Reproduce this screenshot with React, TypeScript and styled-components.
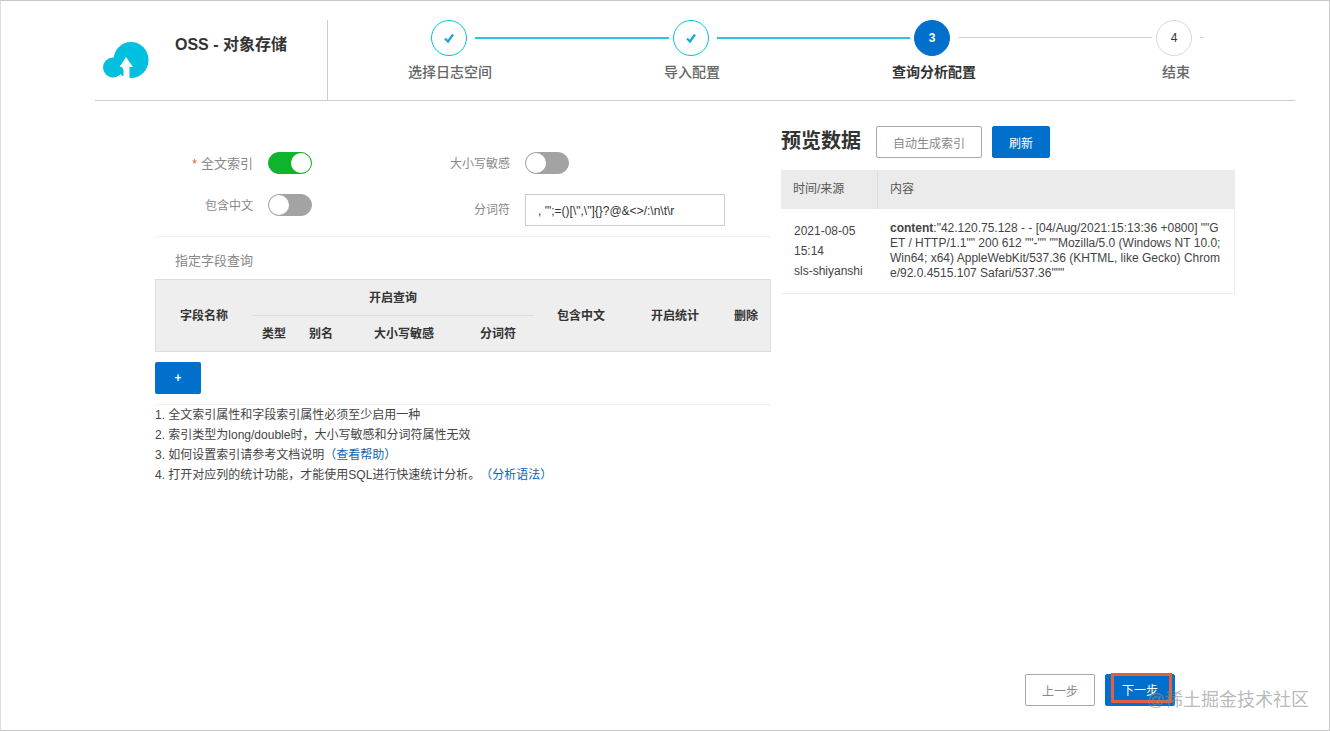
import styled, { createGlobalStyle } from 'styled-components';

const GlobalStyle = createGlobalStyle`
  html, body {
    margin: 0;
    padding: 0;
    background: #fff;
  }
  body {
    font-family: "Liberation Sans", "Noto Sans CJK SC", sans-serif;
    font-size: 12px;
    color: #333;
  }
`;

const Frame = styled.div`
  position: relative;
  display: flex;
  flex-direction: column;
  width: 1330px;
  height: 731px;
  box-sizing: border-box;
  border: 1px solid #c8c8c8;
  border-left-color: #ddd;
  overflow: hidden;
`;

const Header = styled.header`
  display: flex;
  align-items: flex-end;
  flex: none;
  width: 1200px;
  height: 100px;
  box-sizing: border-box;
  margin-left: 94px;
  border-bottom: 1px solid #ccc;
`;

const Brand = styled.div`
  display: flex;
  align-items: flex-start;
  flex: none;
  width: 233px;
  height: 80px;
  box-sizing: border-box;
  padding-left: 8px;
  border-right: 1px solid #ccc;
`;

const Logo = styled.svg`
  flex: none;
  width: 46px;
  height: 36px;
  margin-top: 22px;
`;

const BrandTitle = styled.div`
  margin: 14px 0 0 26px;
  font-size: 16px;
  line-height: 22px;
  font-weight: 700;
  color: #333;
  white-space: nowrap;
`;

const Stepper = styled.div`
  display: flex;
  flex-direction: column;
  align-self: flex-start;
  padding-top: 18px;
`;

const Rail = styled.div`
  display: flex;
  align-items: center;
  height: 37px;
  padding-left: 103px;
`;

const Circle = styled.div<{ $state: 'done' | 'active' | 'todo' }>`
  display: flex;
  align-items: center;
  justify-content: center;
  flex: none;
  width: 36px;
  height: 36px;
  box-sizing: border-box;
  border-radius: 50%;
  font-size: 12px;
  font-weight: ${({ $state }) => ($state === 'active' ? 700 : 400)};
  color: ${({ $state }) => ($state === 'active' ? '#fff' : '#333')};
  background: ${({ $state }) => ($state === 'active' ? '#0070cc' : '#fff')};
  border: 1px solid
    ${({ $state }) =>
      $state === 'done' ? '#00c1de' : $state === 'active' ? '#0070cc' : '#d8d8d8'};
`;

const Line = styled.div<{ $width: number; $done?: boolean; $end: number }>`
  flex: none;
  width: ${({ $width }) => $width}px;
  height: ${({ $done }) => ($done ? 2 : 1)}px;
  margin: 0 ${({ $end }) => $end}px 0 8px;
  background: ${({ $done }) => ($done ? '#2cc5dc' : '#d4d4d4')};
`;

const LabelRow = styled.div`
  display: grid;
  grid-template-columns: repeat(4, 242px);
  margin-top: 6px;
  padding-left: 1px;
`;

const StepLabel = styled.div<{ $active?: boolean }>`
  text-align: center;
  font-size: 14px;
  line-height: 20px;
  font-weight: ${({ $active }) => ($active ? 700 : 500)};
  color: ${({ $active }) => ($active ? '#333' : '#666')};
`;

const Main = styled.main`
  display: flex;
  flex: none;
  padding-left: 154px;
`;

const LeftPanel = styled.section`
  flex: none;
  width: 616px;
  padding-top: 51px;
`;

const FormRow = styled.div<{ $last?: boolean }>`
  display: flex;
  align-items: flex-start;
  margin-bottom: ${({ $last }) => ($last ? 10 : 19)}px;
`;

const FieldLabel = styled.div<{ $width: number; $offset?: number }>`
  flex: none;
  width: ${({ $width }) => $width}px;
  text-align: right;
  font-size: 12px;
  line-height: 22px;
  margin-right: 15px;
  padding-top: ${({ $offset }) => $offset ?? 1}px;
  color: #888;
  white-space: nowrap;
`;

const Required = styled.span`
  margin-right: 4px;
  color: #d9553a;
`;

const LargeLabel = styled.span`
  font-size: 13px;
`;

const Toggle = styled.div<{ $on?: boolean }>`
  display: flex;
  justify-content: ${({ $on }) => ($on ? 'flex-end' : 'flex-start')};
  flex: none;
  width: 44px;
  height: 22px;
  box-sizing: border-box;
  border-radius: 11px;
  border: 1px solid ${({ $on }) => ($on ? '#0db42e' : '#a3a3a3')};
  background: ${({ $on }) => ($on ? '#0db42e' : '#a3a3a3')};
`;

const Knob = styled.div`
  width: 20px;
  height: 20px;
  border-radius: 50%;
  background: #fff;
`;

const ToggleSlot = styled.div`
  flex: none;
  width: 144px;
`;

const TextBox = styled.div`
  flex: none;
  width: 200px;
  height: 32px;
  box-sizing: border-box;
  padding-left: 12px;
  border: 1px solid #ccc;
  font-size: 12px;
  line-height: 32px;
  color: #333;
  white-space: nowrap;
`;

const Separator = styled.div`
  height: 1px;
  background: #eee;
`;

const SectionTitle = styled.div`
  margin: 14px 0 8px 20px;
  font-size: 13px;
  line-height: 20px;
  color: #888;
`;

const FieldTable = styled.table`
  width: 616px;
  height: 73px;
  table-layout: fixed;
  border-collapse: separate;
  border-spacing: 0;
  border: 1px solid #ddd;
  background: #eee;
`;

const HeadCell = styled.th<{ $rule?: boolean }>`
  padding: 0;
  font-size: 12px;
  font-weight: 700;
  line-height: 18px;
  text-align: center;
  vertical-align: middle;
  color: #333;
  border-bottom: ${({ $rule }) => ($rule ? '1px solid #ddd' : 'none')};
`;

const AddButton = styled.div`
  display: flex;
  align-items: center;
  justify-content: center;
  width: 46px;
  height: 32px;
  margin: 10px 0;
  border-radius: 2px;
  background: #0070cc;
  color: #fff;
  font-size: 12px;
  font-weight: 700;
`;

const Notes = styled.ol`
  margin: 0;
  padding: 0;
  list-style: none;
`;

const Note = styled.li`
  font-size: 12px;
  line-height: 20px;
  color: #444;
  white-space: nowrap;
`;

const HelpLink = styled.a<{ $gap?: number }>`
  margin-left: ${({ $gap }) => $gap ?? 0}px;
  color: #0a66b5;
`;

const RightPanel = styled.section`
  flex: none;
  width: 454px;
  margin-left: 10px;
  padding-top: 25px;
`;

const PreviewBar = styled.div`
  display: flex;
  align-items: center;
  height: 32px;
`;

const PreviewTitle = styled.h2`
  margin: -2px 15px 0 0;
  font-size: 20px;
  line-height: 28px;
  font-weight: 700;
  color: #333;
`;

const Button = styled.div<{ $primary?: boolean; $width: number }>`
  display: flex;
  align-items: center;
  justify-content: center;
  flex: none;
  width: ${({ $width }) => $width}px;
  height: 32px;
  box-sizing: border-box;
  border-radius: 2px;
  font-size: 12px;
  color: ${({ $primary }) => ($primary ? '#fff' : '#888')};
  background: ${({ $primary }) => ($primary ? '#0070cc' : '#fff')};
  border: 1px solid ${({ $primary }) => ($primary ? '#0070cc' : '#a8a8a8')};
`;

const RefreshGap = styled.div`
  width: 10px;
`;

const PreviewTable = styled.div`
  margin-top: 12px;
  display: grid;
  grid-template-columns: 97px 357px;
  border-bottom: 1px solid #eee;
  border-right: 1px solid #eee;
  box-sizing: border-box;
`;

const PreviewHead = styled.div<{ $divider?: boolean }>`
  height: 39px;
  box-sizing: border-box;
  padding-left: 12px;
  background: #ebebeb;
  border-right: ${({ $divider }) => ($divider ? '1px solid #ddd' : 'none')};
  font-size: 12px;
  line-height: 39px;
  color: #555;
`;

const TimeCell = styled.div`
  height: 84px;
  box-sizing: border-box;
  padding: 12px 0 0 13px;
  font-size: 12px;
  line-height: 20px;
  color: #444;
`;

const ContentCell = styled.div`
  width: 344px;
  box-sizing: border-box;
  padding: 12px 0 0 12px;
  font-size: 12px;
  line-height: 15px;
  color: #444;
  word-break: break-all;
`;

const Footer = styled.footer`
  display: flex;
  justify-content: flex-end;
  gap: 10px;
  margin-top: auto;
  padding: 0 154px 24px 0;
`;

const NextButton = styled(Button)`
  position: relative;
  padding-bottom: 2px;
`;

const Highlight = styled.div`
  position: absolute;
  top: -2px;
  left: 5px;
  width: 61px;
  height: 30px;
  box-sizing: border-box;
  border: 3px solid #e2603f;
`;

const Watermark = styled.div`
  position: absolute;
  right: 20px;
  bottom: 18px;
  font-size: 18px;
  line-height: 24px;
  color: rgba(140, 140, 140, 0.62);
  white-space: nowrap;
`;

function Check() {
  return (
    <svg width="14" height="14" viewBox="0 0 14 14" fill="none">
      <path d="M3 7.5L6 10.5L11 3.5" stroke="#18a6d2" strokeWidth="2.2" />
    </svg>
  );
}

export default function App() {
  return (
    <Frame>
      <GlobalStyle />
      <Header>
        <Brand>
          <Logo viewBox="0 0 46 36">
            <ellipse cx="28" cy="18" rx="17.5" ry="18" fill="#00bfdf" />
            <circle cx="10" cy="25.5" r="10" fill="#00bfdf" />
            <path d="M23 15L30 25H26.5V36H20.5V29C20.5 27 20 26 18.5 25H16.5Z" fill="#fff" />
          </Logo>
          <BrandTitle>OSS - 对象存储</BrandTitle>
        </Brand>
        <Stepper>
          <Rail>
            <Circle $state="done">
              <Check />
            </Circle>
            <Line $width={194} $done $end={4} />
            <Circle $state="done">
              <Check />
            </Circle>
            <Line $width={193} $done $end={4} />
            <Circle $state="active">3</Circle>
            <Line $width={194} $end={4} />
            <Circle $state="todo">4</Circle>
            <Line $width={4} $end={0} />
          </Rail>
          <LabelRow>
            <StepLabel>选择日志空间</StepLabel>
            <StepLabel>导入配置</StepLabel>
            <StepLabel $active>查询分析配置</StepLabel>
            <StepLabel>结束</StepLabel>
          </LabelRow>
        </Stepper>
      </Header>

      <Main>
        <LeftPanel>
          <FormRow>
            <FieldLabel $width={98}>
              <Required>*</Required>
              <LargeLabel>全文索引</LargeLabel>
            </FieldLabel>
            <ToggleSlot>
              <Toggle $on>
                <Knob />
              </Toggle>
            </ToggleSlot>
            <FieldLabel $width={98}>大小写敏感</FieldLabel>
            <Toggle>
              <Knob />
            </Toggle>
          </FormRow>
          <FormRow $last>
            <FieldLabel $width={98}>包含中文</FieldLabel>
            <ToggleSlot>
              <Toggle>
                <Knob />
              </Toggle>
            </ToggleSlot>
            <FieldLabel $width={98} $offset={5}>
              分词符
            </FieldLabel>
            <TextBox>{`, '";=()[\\",\\"]{}?@&<>/:\\n\\t\\r`}</TextBox>
          </FormRow>
          <Separator />
          <SectionTitle>指定字段查询</SectionTitle>
          <FieldTable>
            <colgroup>
              <col width={96} />
              <col width={44} />
              <col width={50} />
              <col width={116} />
              <col width={72} />
              <col width={94} />
              <col width={94} />
              <col width={48} />
            </colgroup>
            <thead>
              <tr>
                <HeadCell rowSpan={2}>字段名称</HeadCell>
                <HeadCell colSpan={4} $rule>
                  开启查询
                </HeadCell>
                <HeadCell rowSpan={2}>包含中文</HeadCell>
                <HeadCell rowSpan={2}>开启统计</HeadCell>
                <HeadCell rowSpan={2}>删除</HeadCell>
              </tr>
              <tr>
                <HeadCell>类型</HeadCell>
                <HeadCell>别名</HeadCell>
                <HeadCell>大小写敏感</HeadCell>
                <HeadCell>分词符</HeadCell>
              </tr>
            </thead>
          </FieldTable>
          <AddButton>+</AddButton>
          <Separator />
          <Notes>
            <Note>1. 全文索引属性和字段索引属性必须至少启用一种</Note>
            <Note>2. 索引类型为long/double时，大小写敏感和分词符属性无效</Note>
            <Note>
              3. 如何设置索引请参考文档说明<HelpLink>（查看帮助）</HelpLink>
            </Note>
            <Note>
              4. 打开对应列的统计功能，才能使用SQL进行快速统计分析。
              <HelpLink $gap={6}>（分析语法）</HelpLink>
            </Note>
          </Notes>
        </LeftPanel>

        <RightPanel>
          <PreviewBar>
            <PreviewTitle>预览数据</PreviewTitle>
            <Button $width={106}>自动生成索引</Button>
            <RefreshGap />
            <Button $primary $width={58}>
              刷新
            </Button>
          </PreviewBar>
          <PreviewTable>
            <PreviewHead $divider>时间/来源</PreviewHead>
            <PreviewHead>内容</PreviewHead>
            <TimeCell>
              2021-08-05
              <br />
              15:14
              <br />
              sls-shiyanshi
            </TimeCell>
            <ContentCell>
              <b>content</b>
              {`:"42.120.75.128 - - [04/Aug/2021:15:13:36 +0800] ""GET / HTTP/1.1"" 200 612 ""-"" ""Mozilla/5.0 (Windows NT 10.0; Win64; x64) AppleWebKit/537.36 (KHTML, like Gecko) Chrome/92.0.4515.107 Safari/537.36"""`}
            </ContentCell>
          </PreviewTable>
        </RightPanel>
      </Main>

      <Footer>
        <Button $width={70}>上一步</Button>
        <NextButton $primary $width={70}>
          下一步
          <Highlight />
        </NextButton>
      </Footer>
      <Watermark>@稀土掘金技术社区</Watermark>
    </Frame>
  );
}
